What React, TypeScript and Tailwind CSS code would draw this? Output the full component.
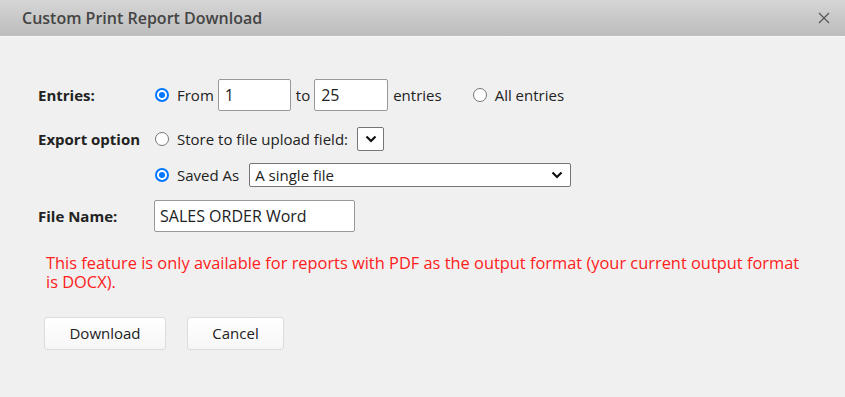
import React from "react";

const Radio: React.FC<{ checked?: boolean }> = ({ checked }) => (
  <span
    className={
      checked
        ? "inline-flex w-[14px] h-[14px] rounded-full border-2 border-[#0075ff] bg-white items-center justify-center"
        : "inline-flex w-[14px] h-[14px] rounded-full border border-[#767676] bg-white"
    }
  >
    {checked && <span className="w-[6px] h-[6px] rounded-full bg-[#0075ff]" />}
  </span>
);

const Chevron = () => (
  <svg width="12" height="8" viewBox="0 0 12 8" fill="none">
    <path d="M1.5 1.5 L6 6 L10.5 1.5" stroke="#111" strokeWidth="2.2" />
  </svg>
);

const Button: React.FC<{ label: string; width: string }> = ({ label, width }) => (
  <button
    className={`${width} h-[33px] rounded-[3px] border border-[#dcdcdc] bg-gradient-to-b from-white to-[#f6f6f6] text-[15px] text-[#222]`}
  >
    {label}
  </button>
);

export default function App() {
  return (
    <div
      className="w-[845px] h-[397px] bg-[#f0f0f0] text-[15px] text-[#222] overflow-hidden"
      style={{ fontFamily: '"Open Sans", "Liberation Sans", sans-serif' }}
    >
      {/* Header */}
      <div className="h-[37px] bg-gradient-to-b from-[#d6d6d6] to-[#bcbcbc] flex items-center justify-between pl-[22px] pr-[15px] border-b border-[#f8f8f8]">
        <span className="text-[16px] font-semibold text-[#444]">Custom Print Report Download</span>
        <svg width="12" height="12" viewBox="0 0 12 12">
          <path d="M1 1 L11 11 M11 1 L1 11" stroke="#555" strokeWidth="1.2" />
        </svg>
      </div>

      <div className="pl-[38px] pt-[42px]">
        {/* Entries */}
        <div className="flex items-center h-[32px]">
          <div className="w-[117px] font-bold">Entries:</div>
          <Radio checked />
          <span className="ml-[8px]">From</span>
          <input
            readOnly
            value="1"
            className="ml-[4px] w-[73px] h-[32px] border border-[#999] rounded-[2px] bg-white px-[6px] text-[16px]"
          />
          <span className="ml-[5px]">to</span>
          <input
            readOnly
            value="25"
            className="ml-[4px] w-[74px] h-[32px] border border-[#999] rounded-[2px] bg-white px-[6px] text-[16px]"
          />
          <span className="ml-[5px]">entries</span>
          <span className="ml-[31px] flex items-center">
            <Radio />
          </span>
          <span className="ml-[8px]">All entries</span>
        </div>

        {/* Export option */}
        <div className="flex items-center h-[24px] mt-[16px]">
          <div className="w-[117px] font-bold">Export option</div>
          <Radio />
          <span className="ml-[8px]">Store to file upload field:</span>
          <div className="ml-[9px] w-[27px] h-[24px] border border-[#767676] rounded-[2px] bg-white flex items-center justify-center">
            <Chevron />
          </div>
        </div>

        {/* Saved As */}
        <div className="flex items-center h-[24px] mt-[12px]">
          <div className="w-[117px]" />
          <Radio checked />
          <span className="ml-[8px]">Saved As</span>
          <div className="ml-[10px] w-[322px] h-[24px] border border-[#767676] rounded-[2px] bg-white flex items-center justify-between pl-[5px] pr-[7px]">
            <span>A single file</span>
            <Chevron />
          </div>
        </div>

        {/* File Name */}
        <div className="flex items-center h-[32px] mt-[13px]">
          <div className="w-[116px] font-bold">File Name:</div>
          <input
            readOnly
            value="SALES ORDER Word"
            className="w-[201px] h-[32px] border border-[#999] rounded-[2px] bg-white px-[5px] text-[16px]"
          />
        </div>

        {/* Warning */}
        <p className="mt-[21px] ml-[8px] w-[764px] text-[16.4px] leading-[19px] text-[#ff2020]">
          This feature is only available for reports with PDF as the output format (your current output format is DOCX).
        </p>

        {/* Buttons */}
        <div className="flex gap-[21px] mt-[26px] ml-[6px]">
          <Button label="Download" width="w-[122px]" />
          <Button label="Cancel" width="w-[97px]" />
        </div>
      </div>
    </div>
  );
}
